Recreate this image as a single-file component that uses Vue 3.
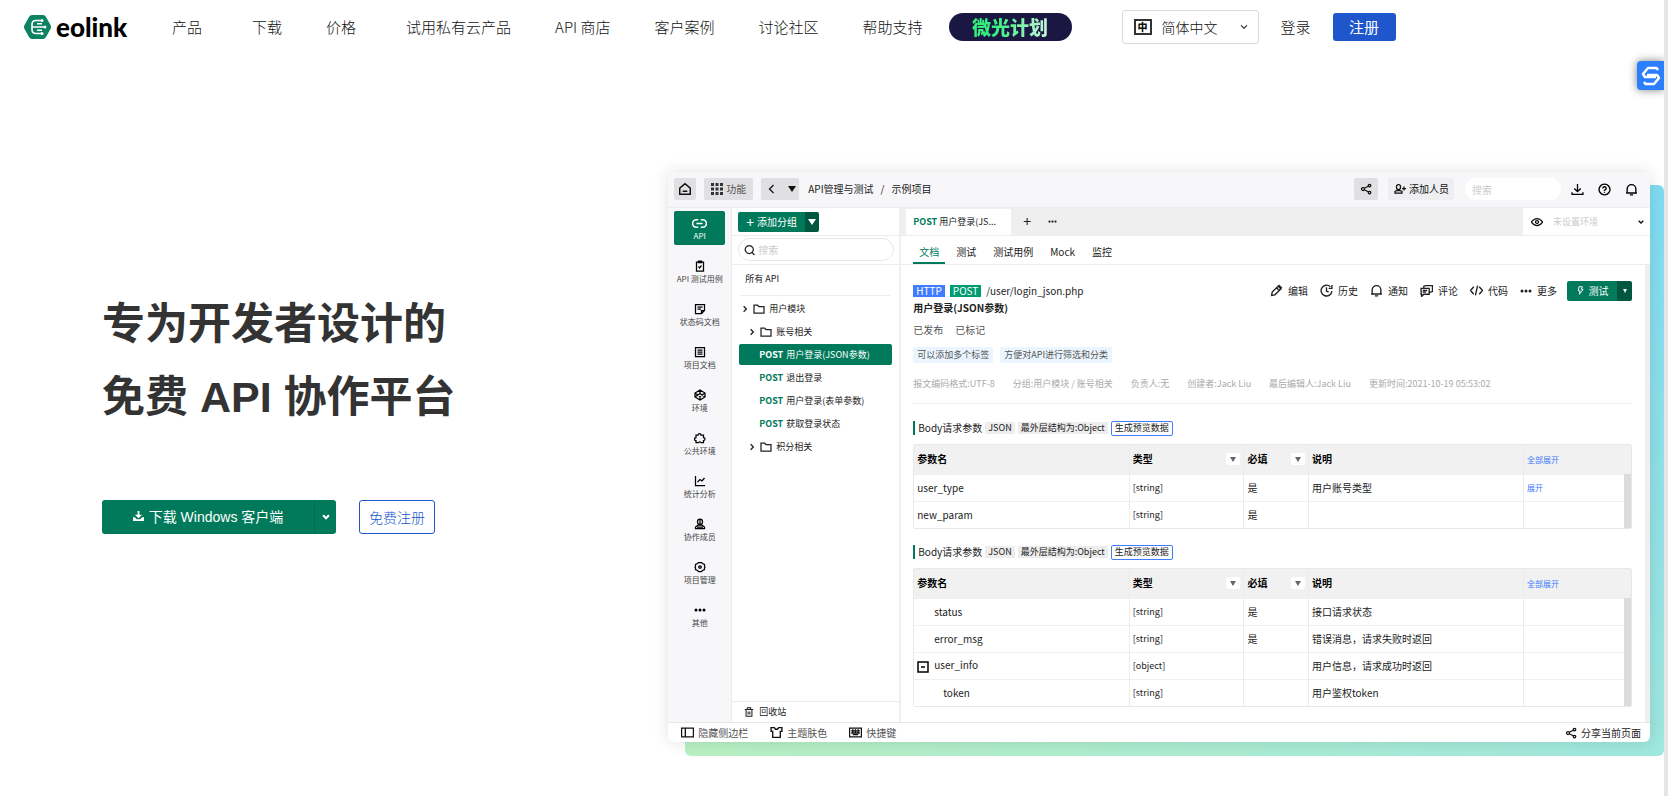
<script setup>
const navItems = [
  { label: '产品', wide: true },
  { label: '下载' },
  { label: '价格', wide: true },
  { label: '试用私有云产品' },
  { label: 'API 商店' },
  { label: '客户案例' },
  { label: '讨论社区' },
  { label: '帮助支持' },
]

const icons = {
  home: 'M3 10.500L12 3l9 7.500V21H3zM8 16h8',
  back: 'M15 4l-8 8 8 8',
  right: 'M8 4l8 8-8 8',
  down: 'M5 8l7 7 7-7',
  share: 'M8.500 10.500l8-4M8.500 13.500l8 4M6 9a3 3 0 1 0 .01 0M19 2.500a2.500 2.500 0 1 0 .01 0M19 16.500a2.500 2.500 0 1 0 .01 0',
  addUser: 'M9 3a4 4 0 0 1 4 4v2a4 4 0 0 1-8 0V7a4 4 0 0 1 4-4zM2 20v-3l4-2h6l4 2v3zM20 7v8M16 11h8',
  download: 'M12 2v13M6 10l6 6 6-6M2 17v4h20v-4',
  help: 'M12 2a10 10 0 1 0 .01 0M9 10a3 3 0 1 1 4 2.700l-1 1V15M12 17v1.500',
  bell: 'M4 18V11a8 8 0 0 1 16 0v7M2 18.500h20M9 22h6',
  link: 'M10 6H7a6 6 0 0 0 0 12h3M14 6h3a6 6 0 0 1 0 12h-3M7 12h10',
  testcase: 'M5 4h14v18H5zM9 2h6v3H9zM9 13l2 3 4-5',
  status: 'M3 3h18v12l-6 6H3zM7 8h10M7 12h7M15 21v-6h6',
  doc: 'M3 3h18v18H3zM7 8h10M7 12h10M7 16h10',
  env: 'M12 2l10 6v8l-10 6-10-6V8zM2 8l10 7 10-7M2 16l10-7 10 7M12 2v7M12 15v7',
  puzzle: 'M4 6h4a3 3 0 1 1 6 0h5v5a3 3 0 1 1 0 6v4h-5a3 3 0 0 0-5 0H4v-4a3 3 0 1 1 0-6z',
  chart: 'M3 2v19h19M7 14l5-5 4 3 5-6',
  member: 'M12 2a5 5 0 0 1 5 5v1a5 5 0 0 1-10 0V7a5 5 0 0 1 5-5zM12 2v10M3 21v-3l5-4h8l5 4v3zM6 18h12',
  gear: 'M9 3h6l2 2 4 2v3l1 2-1 2v3l-4 2-2 2H9l-2-2-4-2v-3l-1-2 1-2V7l4-2zM12 9.500a2.500 2.500 0 1 0 .01 0',
  folder: 'M2 4h7l3 3h10v13H2z',
  search: 'M10.500 3a8 8 0 1 0 .01 0M16 17l5 5',
  trash: 'M2 6h20M8 6V2h8v4M5 6v16h14V6M10 11v7M14 11v7',
  sidebar: 'M1 4h22v16H1zM8 4v16',
  shirt: 'M2 3h6l2 3h4l2-3h6v7h-3v11H5V10H2z',
  keyboard: 'M1 4h22v16H1zM4 9h16M4 13h16M7 16h10M7 6v7M12 6v7M17 6v7',
  eye: 'M1 12q5-7 11-7t11 7q-5 7-11 7T1 12zM12 9a3 3 0 1 0 .01 0',
  edit: 'M3 21l1-6L15 4l5 5L9 20zM12 7l5 5M16 2l6 6',
  history: 'M19 5a10 10 0 1 0 3 8M22 2v6h-6M12 6v7l4 2',
  comment: 'M2 8h15v11H7l-4 4v-4H2zM7 8V4l4-1h12v11l-6 2M5 12h8M5 15h6',
  code: 'M7 5l-6 7 6 7M17 5l6 7-6 7M14 3l-4 18',
  bolt: 'M8 2h9l-3 7h5L9 22l2-9H6z',
}

const sideItems = [
  { icon: 'testcase', label: 'API 测试用例' },
  { icon: 'status', label: '状态码文档' },
  { icon: 'doc', label: '项目文档' },
  { icon: 'env', label: '环境' },
  { icon: 'puzzle', label: '公共环境' },
  { icon: 'chart', label: '统计分析' },
  { icon: 'member', label: '协作成员' },
  { icon: 'gear', label: '项目管理' },
  { icon: 'dots', label: '其他' },
]

const tree = [
  { folder: true, label: '用户模块' },
  { folder: true, nested: true, label: '账号相关' },
  { label: '用户登录(JSON参数)', active: true },
  { label: '退出登录' },
  { label: '用户登录(表单参数)' },
  { label: '获取登录状态' },
  { folder: true, nested: true, label: '积分相关' },
]

const actions = [
  { icon: 'edit', label: '编辑' },
  { icon: 'history', label: '历史' },
  { icon: 'bell', label: '通知' },
  { icon: 'comment', label: '评论' },
  { icon: 'code', label: '代码' },
  { icon: 'dots', label: '更多' },
]

const meta = [
  '报文编码格式:UTF-8',
  '分组:用户模块 / 账号相关',
  '负责人:无',
  '创建者:Jack Liu',
  '最后编辑人:Jack Liu',
  '更新时间:2021-10-19 05:53:02',
]

const sections = [
  [
    { name: 'user_type', type: '[string]', required: '是', note: '用户账号类型', action: '展开' },
    { name: 'new_param', type: '[string]', required: '是', note: '' },
  ],
  [
    { name: 'status', type: '[string]', required: '是', note: '接口请求状态', level: 1 },
    { name: 'error_msg', type: '[string]', required: '是', note: '错误消息，请求失败时返回', level: 1 },
    { name: 'user_info', type: '[object]', required: '', note: '用户信息，请求成功时返回', open: true },
    { name: 'token', type: '[string]', required: '', note: '用户鉴权token', level: 2 },
  ],
]
</script>

<template>
  <div class="page">
    <header class="header">
      <a class="logo" href="#">
        <svg class="logo-mark" viewBox="0 0 27 24" aria-hidden="true">
          <path d="M8 0h11q2 0 3 2l4.500 8q1 2 0 4L22 22q-1 2-3 2H8q-2 0-3-2L.5 14q-1-2 0-4L5 2q1-2 3-2z" fill="#0b8261" />
          <path d="M17 5.500h-5q-4 0-4 4v5q0 4 4 4h5M8 12h12M13 8.800h5M13 15.200h5" fill="none" stroke="#fff" stroke-width="1.600" />
          <circle cx="18" cy="18.500" r="1.500" fill="#fff" /><circle cx="21" cy="12" r="1.500" fill="#fff" /><circle cx="18" cy="5.500" r="1.500" fill="#fff" />
        </svg>
        <span>eolink</span>
      </a>
      <nav class="nav">
        <a v-for="n in navItems" :key="n.label" href="#" :class="{ wide: n.wide }">{{ n.label }}</a>
      </nav>
      <a class="promo" href="#"><span>微光计划</span></a>
      <button class="lang" type="button">
        <span class="lang-icon">中</span>
        <span>简体中文</span>
        <svg class="ico s10 lang-caret" viewBox="0 0 24 24"><path :d="icons.down" /></svg>
      </button>
      <a class="login" href="#">登录</a>
      <button class="signup" type="button">注册</button>
    </header>

    <main class="hero">
      <section class="copy">
        <h1>专为开发者设计的<br />免费 API 协作平台</h1>
        <div class="cta">
          <div class="split">
            <button type="button" class="split-main">
              <svg class="dl" viewBox="0 0 12 11"><path d="M5 0h2v4h3L6 8 2 4h3zM0 7h2l2 2h4l2-2h2v4H0z" /></svg>
              下载 Windows 客户端
            </button>
            <button type="button" class="split-caret" aria-label="更多下载">
              <svg class="ico s10" viewBox="0 0 24 24"><path :d="icons.down" stroke-width="5" /></svg>
            </button>
          </div>
          <button type="button" class="ghost">免费注册</button>
        </div>
      </section>

      <section class="visual">
        <div class="app">
          <div class="topbar">
            <button class="tb" type="button" aria-label="主页"><svg class="ico s14" viewBox="0 0 24 24"><path :d="icons.home" /></svg></button>
            <button class="tb" type="button">
              <svg class="grid-ico" viewBox="0 0 12 12"><path d="M0 0h3v3H0zM4.500 0h3v3h-3zM9 0h3v3H9zM0 4.500h3v3H0zM4.500 4.500h3v3h-3zM9 4.500h3v3H9zM0 9h3v3H0zM4.500 9h3v3h-3zM9 9h3v3H9z" /></svg>
              功能
            </button>
            <button class="tb back" type="button" aria-label="返回">
              <svg class="ico s12" viewBox="0 0 24 24"><path :d="icons.back" /></svg>
              <i class="tri"></i>
            </button>
            <div class="crumbs"><span>API管理与测试</span><span>/</span><span>示例项目</span></div>
            <button class="tb share" type="button" aria-label="分享"><svg class="ico s12" viewBox="0 0 24 24"><path :d="icons.share" /></svg></button>
            <button class="tb invite" type="button"><svg class="ico s12" viewBox="0 0 24 24"><path :d="icons.addUser" /></svg>添加人员</button>
            <input class="top-search" type="text" placeholder="搜索" aria-label="搜索" />
            <div class="top-icons">
              <svg v-for="i in ['download', 'help', 'bell']" :key="i" class="ico s13" viewBox="0 0 24 24"><path :d="icons[i]" /></svg>
            </div>
          </div>

          <div class="body">
            <aside class="side">
              <a class="side-active" href="#">
                <svg class="ico s15" viewBox="0 0 24 24"><path :d="icons.link" /></svg>
                <span>API</span>
              </a>
              <a v-for="s in sideItems" :key="s.label" class="side-item" href="#">
                <svg v-if="s.icon === 'dots'" class="dots" viewBox="0 0 12 12"><circle cx="2" cy="6" r="1.500" /><circle cx="6" cy="6" r="1.500" /><circle cx="10" cy="6" r="1.500" /></svg>
                <svg v-else class="ico s12" viewBox="0 0 24 24"><path :d="icons[s.icon]" /></svg>
                <span>{{ s.label }}</span>
              </a>
            </aside>

            <div class="groups">
              <div class="group-add">
                <button class="add" type="button"><span class="plus">+</span>添加分组</button>
                <button class="add-caret" type="button" aria-label="更多"><i class="tri white"></i></button>
              </div>
              <div class="group-search">
                <label class="searchbox">
                  <svg class="ico s12" viewBox="0 0 24 24"><path :d="icons.search" /></svg>
                  <input type="text" placeholder="搜索" aria-label="搜索分组" />
                </label>
              </div>
              <div class="all-api">所有 API</div>
              <ul class="tree">
                <li v-for="t in tree" :key="t.label" :class="{ active: t.active, nested: t.nested, api: !t.folder }">
                  <template v-if="t.folder">
                    <svg class="ico s8" viewBox="0 0 24 24"><path :d="icons.right" stroke-width="4" /></svg>
                    <svg class="ico s12" viewBox="0 0 24 24"><path :d="icons.folder" /></svg>
                  </template>
                  <b v-else>POST</b>
                  <span>{{ t.label }}</span>
                </li>
              </ul>
              <a class="recycle" href="#"><svg class="ico s10" viewBox="0 0 24 24"><path :d="icons.trash" /></svg>回收站</a>
            </div>

            <div class="main">
              <div class="tabbar">
                <div class="tab"><b>POST</b> 用户登录(JS...</div>
                <button class="plus-tab" type="button">+</button>
                <svg class="dots small" viewBox="0 0 12 12"><circle cx="2" cy="6" r="1.500" /><circle cx="6" cy="6" r="1.500" /><circle cx="10" cy="6" r="1.500" /></svg>
                <button class="envbox" type="button">
                  <svg class="ico s12" viewBox="0 0 24 24"><path :d="icons.eye" /></svg>
                  <span>未设置环境</span>
                  <svg class="ico s8" viewBox="0 0 24 24"><path :d="icons.down" stroke-width="4" /></svg>
                </button>
              </div>
              <nav class="subtabs">
                <a class="on" href="#">文档</a><a href="#">测试</a><a href="#">测试用例</a><a href="#">Mock</a><a href="#">监控</a>
              </nav>

              <div class="content">
                <div class="api-head">
                  <div class="endpoint"><span class="tag">HTTP</span><span class="tag post">POST</span><span>/user/login_json.php</span></div>
                  <div class="actions">
                    <button v-for="a in actions" :key="a.label" class="action" type="button">
                      <svg v-if="a.icon === 'dots'" class="dots" viewBox="0 0 12 12"><circle cx="2" cy="6" r="1.500" /><circle cx="6" cy="6" r="1.500" /><circle cx="10" cy="6" r="1.500" /></svg>
                      <svg v-else class="ico s13" viewBox="0 0 24 24"><path :d="icons[a.icon]" /></svg>
                      {{ a.label }}
                    </button>
                    <div class="test">
                      <button type="button" class="test-main"><svg class="ico s9" viewBox="0 0 24 24"><path :d="icons.bolt" /></svg>测试</button>
                      <button type="button" class="test-caret" aria-label="更多测试"><i class="tri white tiny"></i></button>
                    </div>
                  </div>
                </div>
                <h2>用户登录(JSON参数)</h2>
                <div class="state"><span>已发布</span><span>已标记</span></div>
                <div class="labels"><span>可以添加多个标签</span><span>方便对API进行筛选和分类</span></div>
                <div class="meta"><span v-for="m in meta" :key="m">{{ m }}</span></div>

                <section v-for="(rows, i) in sections" :key="i" class="params">
                  <div class="params-head">
                    <h3>Body请求参数</h3>
                    <span class="chip">JSON</span>
                    <span class="chip">最外层结构为:Object</span>
                    <button type="button">生成预览数据</button>
                  </div>
                  <div class="table-wrap">
                    <table>
                      <colgroup><col class="c1" /><col class="c2" /><col class="c3" /><col class="c4" /><col class="c5" /></colgroup>
                      <thead>
                        <tr>
                          <th>参数名</th>
                          <th><div class="th">类型<button type="button" aria-label="筛选类型"><i class="tri gray"></i></button></div></th>
                          <th><div class="th">必填<button type="button" aria-label="筛选必填"><i class="tri gray"></i></button></div></th>
                          <th>说明</th>
                          <th><a href="#">全部展开</a></th>
                        </tr>
                      </thead>
                      <tbody>
                        <tr v-for="r in rows" :key="r.name">
                          <td :class="'level' + (r.level || 0)">
                            <svg v-if="r.open" class="minus" viewBox="0 0 12 12"><path d="M1 1h10v10H1zM4 6h4" /></svg>{{ r.name }}
                          </td>
                          <td class="type">{{ r.type }}</td>
                          <td>{{ r.required }}</td>
                          <td>{{ r.note }}</td>
                          <td><a v-if="r.action" href="#">{{ r.action }}</a></td>
                        </tr>
                      </tbody>
                    </table>
                  </div>
                </section>
              </div>
            </div>
          </div>

          <footer class="foot">
            <a href="#"><svg class="ico s13" viewBox="0 0 24 24"><path :d="icons.sidebar" /></svg>隐藏侧边栏</a>
            <a href="#"><svg class="ico s13" viewBox="0 0 24 24"><path :d="icons.shirt" /></svg>主题肤色</a>
            <a href="#"><svg class="ico s13" viewBox="0 0 24 24"><path :d="icons.keyboard" /></svg>快捷键</a>
            <a class="foot-share" href="#"><svg class="ico s12" viewBox="0 0 24 24"><path :d="icons.share" /></svg>分享当前页面</a>
          </footer>
        </div>
      </section>
    </main>

    <button class="floating" type="button" aria-label="助手">
      <svg viewBox="0 0 20 20"><path d="M17 4L15.500 2H7L2 8l2 3h11M3 16l1.500 2H13l5-6-2-3H6" /></svg>
    </button>
    <div class="edge"></div>
  </div>
</template>

<style>
body { background: #fff; overflow-x: hidden; }
</style>

<style scoped>
* { box-sizing: border-box; }
.page { position: relative; min-height: 100vh; font-family: "Liberation Sans", "Noto Sans CJK SC", sans-serif; color: #333; overflow: hidden; }
a { color: inherit; text-decoration: none; }
button { font: inherit; color: inherit; border: 0; background: none; padding: 0; margin: 0; }
input { font: inherit; border: 0; outline: 0; padding: 0; min-width: 0; background: none; }
input::placeholder { color: #ccc; opacity: 1; }
h1, h2, h3, ul { margin: 0; padding: 0; }
ul { list-style: none; }
svg { display: block; flex: none; }

.ico { fill: none; stroke: currentColor; stroke-width: 2.500; stroke-linejoin: miter; }
.s8 { width: 8px; height: 8px; }
.s9 { width: 9px; height: 9px; }
.s10 { width: 10px; height: 10px; }
.s12 { width: 12px; height: 12px; }
.s13 { width: 13px; height: 13px; }
.s14 { width: 14px; height: 14px; }
.s15 { width: 15px; height: 15px; }
.dots { width: 12px; height: 12px; fill: currentColor; }
.dots.small { width: 9px; height: 9px; }
.tri { display: block; border: 4px solid transparent; border-top: 6px solid currentColor; border-bottom: 0; }
.tri.white { color: #fff; }
.tri.tiny { border-width: 4px 2px 0; }
.tri.gray { color: #666; border-width: 5px 3px 0; }

.header { display: flex; align-items: center; height: 54px; padding-left: 24px; font-family: "Noto Sans CJK SC", sans-serif; font-size: 15px; font-weight: 300; color: #111; white-space: nowrap; }
.logo { display: flex; align-items: center; gap: 5px; width: 148px; color: #000; font: 900 26px/30px Lato, sans-serif; }
.logo-mark { width: 27px; height: 24px; }
.nav { display: flex; gap: 44px; padding-bottom: 2px; }
.nav .wide { margin-right: 6px; }
.promo { display: flex; align-items: center; justify-content: center; width: 123px; height: 28px; margin-left: 26px; border-radius: 14px; background: #1a1742; font-size: 19px; line-height: 28px; font-weight: 900; }
.promo span { background: linear-gradient(90deg, #35f07c 30%, #c9f5dc); background-clip: text; color: transparent; }
.lang { display: flex; align-items: center; width: 137px; height: 34px; margin-left: 50px; padding: 0 9px 0 11px; border: 1px solid #d9d9d9; border-radius: 3px; font-size: 14px; gap: 10px; }
.lang-icon { display: flex; align-items: center; justify-content: center; width: 18px; height: 16px; border: 2px solid #333; font-size: 10px; line-height: 10px; font-weight: 900; }
.lang-caret { margin-left: auto; }
.login { margin-left: 22px; padding-bottom: 2px; }
.signup { width: 63px; height: 28px; margin-left: 22px; border-radius: 3px; background: #2056cc; color: #fff; line-height: 26px; font-weight: 400; }

.hero { display: grid; grid-template-columns: 81fr 119fr; padding: 118px 18px 38px 0; }
.copy { padding: 116px 0 0 102px; }
h1 { font-size: 43px; line-height: 73px; font-weight: 700; color: #333; white-space: nowrap; }
.cta { display: flex; gap: 23px; margin-top: 66px; font-size: 14px; font-weight: 300; }
.split { display: flex; height: 34px; border-radius: 3px; overflow: hidden; background: #007a5a; color: #fff; }
.split-main { display: flex; align-items: center; justify-content: center; gap: 5px; width: 213px; padding-bottom: 2px; border-right: 1px solid #006b4f; font-weight: 400; }
.dl { width: 11px; height: 10px; fill: #fff; }
.split-caret { display: flex; align-items: center; justify-content: center; width: 21px; }
.ghost { width: 76px; height: 34px; border: 1px solid #2056cc; border-radius: 3px; color: #2056cc; }

.visual { position: relative; min-width: 0; }
.visual::before { content: ""; position: absolute; inset: 13px -14px -14px 17px; border-radius: 6px; background: linear-gradient(to top right, #b9f0c2 0%, #a2e9dc 45%, #93e1e6 70%, #7fdbf2 100%); }
.app { position: relative; border-radius: 6px; background: #fff; box-shadow: 0 0 16px rgba(0, 0, 0, .12); overflow: hidden; font: 10px/14px "Noto Sans CJK SC", "Noto Sans", sans-serif; color: #222; white-space: nowrap; }
.topbar { display: flex; align-items: center; height: 36px; padding: 0 12px 1px 6px; background: #f7f7fa; border-bottom: 1px solid #ececee; }
.tb { display: flex; align-items: center; justify-content: center; gap: 3px; height: 22px; padding: 0 4px; margin-right: 8px; border-radius: 2px; background: #e0e0e2; color: #111; }
.tb:nth-child(2) { padding: 0 7px; color: #555; }
.back { padding: 0 3px 0 5px; gap: 10px; }
.grid-ico { width: 12px; height: 12px; fill: #333; }
.crumbs { display: flex; gap: 7px; margin-left: 1px; }
.share { margin-left: auto; padding: 0 6px; margin-right: 10px; }
.invite { background: #efeff1; padding: 0 5px 0 6px; margin-right: 11px; }
.top-search { width: 96px; height: 22px; padding: 0 7px; border-radius: 11px; background: #fff; }
.top-icons { display: flex; gap: 14px; margin-left: 10px; color: #000; }

.body { display: flex; }
.side { width: 64px; padding: 3px 6px 0; background: #f7f7fa; border-right: 1px solid #ececee; color: #000; }
.side-active, .side-item { display: flex; flex-direction: column; align-items: center; font-size: 8px; line-height: 10px; }
.side-active { height: 34px; padding-top: 5px; border-radius: 2px; background: #007a5a; color: #fff; }
.side-item { gap: 2px; height: 43px; padding-top: 15px; }
.side-item span { color: #444; }
.groups { display: flex; flex-direction: column; width: 169px; border-right: 2px solid #efefef; font-size: 9px; }
.group-add { display: flex; align-items: center; height: 28px; padding-left: 6px; border-bottom: 1px solid #ececee; color: #fff; font-size: 10px; }
.add { display: flex; align-items: center; gap: 3px; height: 20px; width: 67px; padding-left: 8px; border-radius: 2px 0 0 2px; background: #007a5a; }
.plus { font-size: 14px; }
.add-caret { display: flex; align-items: center; justify-content: center; width: 14px; height: 20px; border-radius: 0 2px 2px 0; background: #00563f; }
.group-search { height: 29px; padding: 2px 5px 2px 6px; border-bottom: 1px solid #ececee; font-size: 10px; }
.searchbox { display: flex; align-items: center; gap: 2px; height: 23px; padding-left: 5px; border: 1px solid #e6e6e6; border-radius: 12px; }
.searchbox input { flex: 1; }
.all-api { height: 31px; margin: 0 9px; padding-left: 4px; line-height: 28px; border-bottom: 1px solid #ececec; }
.tree li { display: flex; align-items: center; gap: 4px; height: 21px; margin: 2px 7px; padding-left: 2px; border-radius: 2px; }
.tree li.nested { padding-left: 9px; }
.tree li.api { padding-left: 20px; gap: 3px; }
.tree b, .tab b { color: #007a5a; }
.tree li.active { background: #007a5a; color: #fff; }
.tree li.active b { color: #fff; }
.recycle { display: flex; align-items: center; gap: 5px; height: 21px; margin-top: auto; padding-left: 12px; border-top: 1px solid #ececee; }

.main { flex: 1; min-width: 0; }
.tabbar { display: flex; align-items: center; height: 28px; padding-left: 5px; background: #efefef; border-bottom: 1px solid #ececee; }
.tab { align-self: flex-end; width: 105px; height: 26px; padding-left: 7px; background: #fff; font-size: 9px; line-height: 26px; }
.plus-tab { margin: 0 17px 0 12px; padding-bottom: 2px; font-size: 14px; }
.envbox { display: flex; align-items: center; align-self: stretch; width: 127px; margin-left: auto; padding: 0 5px 0 8px; background: #fff; gap: 10px; font-size: 9px; color: #111; }
.envbox span { flex: 1; text-align: left; color: #ccc; }
.subtabs { display: flex; gap: 17px; height: 29px; padding-left: 12px; border-bottom: 1px solid #ececee; line-height: 32px; }
.subtabs .on { padding: 0 6px; margin-right: -6px; border-bottom: 2px solid #007a5a; color: #007a5a; }
.content { padding: 15px 13px 15px 12px; border-right: 5px solid #efefef; }
.api-head { display: flex; align-items: center; justify-content: space-between; height: 21px; }
.endpoint { display: flex; align-items: center; gap: 5px; }
.tag { height: 12px; padding: 0 3px; line-height: 12px; color: #fff; background: #407cff; }
.tag.post { background: #009b72; }
.actions { display: flex; align-items: center; gap: 12px; }
.action { display: flex; align-items: center; gap: 5px; }
.test { display: flex; height: 20px; margin-left: -2px; border-radius: 2px; overflow: hidden; color: #fff; }
.test-main { display: flex; align-items: center; justify-content: center; gap: 4px; width: 50px; background: #007a5a; }
.test-caret { display: flex; align-items: center; justify-content: center; width: 15px; background: #00563f; }
h2 { font-size: 10px; line-height: 14px; font-weight: 700; }
.state { display: flex; gap: 12px; margin-top: 8px; color: #555; }
.labels { display: flex; gap: 7px; margin-top: 10px; font-size: 9px; line-height: 16px; color: #555; }
.labels span { padding: 0 4px; border-radius: 2px; background: #ebf5ff; }
.meta { display: flex; gap: 18px; height: 41px; padding-top: 14px; font-size: 9px; color: #aaa; border-bottom: 1px solid #ececec; }
.params { padding-top: 16px; }
.params + .params { padding-top: 15px; }
.params-head { display: flex; align-items: center; gap: 3px; height: 16px; font-size: 9px; line-height: 12px; }
h3 { padding-left: 3px; border-left: 2px solid #007a5a; font-size: 10px; line-height: 14px; font-weight: 400; }
.chip { padding: 0 3px; background: #ededed; }
.params-head button { height: 15px; padding: 0 3px; border: 1px solid #407cff; border-radius: 2px; }
.table-wrap { position: relative; margin-top: 8px; border: 1px solid #e8e8e8; border-radius: 2px; overflow: hidden; }
.table-wrap::after { content: ""; position: absolute; top: 29px; right: 0; bottom: 0; width: 7px; background: #dcdcdc; }
table { width: 100%; table-layout: fixed; border-collapse: collapse; }
.c1 { width: 30%; }
.c2 { width: 16%; }
.c3 { width: 9%; }
.c4 { width: 30%; }
.c5 { width: 15%; }
th, td { padding: 0 3px; text-align: left; border-left: 1px solid #ececec; }
th:first-child, td:first-child { border-left: 0; }
th { height: 29px; background: #f1f1f1; font-weight: 700; color: #000; }
td { height: 27px; border-top: 1px solid #f0f0f0; }
.type { font-size: 9px; }
th a, td a { font-size: 8px; font-weight: 400; color: #407cff; }
.th { display: flex; align-items: center; justify-content: space-between; }
.th button { display: flex; align-items: center; justify-content: center; width: 14px; height: 12px; border-radius: 2px; background: #fff; }
td.level1 { padding-left: 20px; }
td.level2 { padding-left: 29px; }
.minus { display: inline-block; width: 12px; height: 12px; margin-right: 5px; vertical-align: middle; fill: none; stroke: #000; stroke-width: 1.500; }
.foot { display: flex; align-items: center; gap: 22px; height: 20px; padding: 0 9px 0 13px; border-top: 1px solid #e6e6e6; color: #555; }
.foot a { display: flex; align-items: center; gap: 4px; }
.foot svg { color: #111; }
.foot .foot-share { margin-left: auto; color: #222; }

.floating { position: absolute; top: 61px; right: 4px; display: flex; align-items: center; justify-content: center; width: 27px; height: 29px; border-radius: 4px 0 0 4px; background: #2b7fff; box-shadow: 0 0 8px rgba(0, 0, 0, .5); }
.floating svg { width: 20px; height: 20px; fill: none; stroke: #fff; stroke-width: 2.500; stroke-linejoin: round; }
.edge { position: absolute; top: 0; right: 0; bottom: 0; width: 4px; background: #e6e6e6; }
</style>
